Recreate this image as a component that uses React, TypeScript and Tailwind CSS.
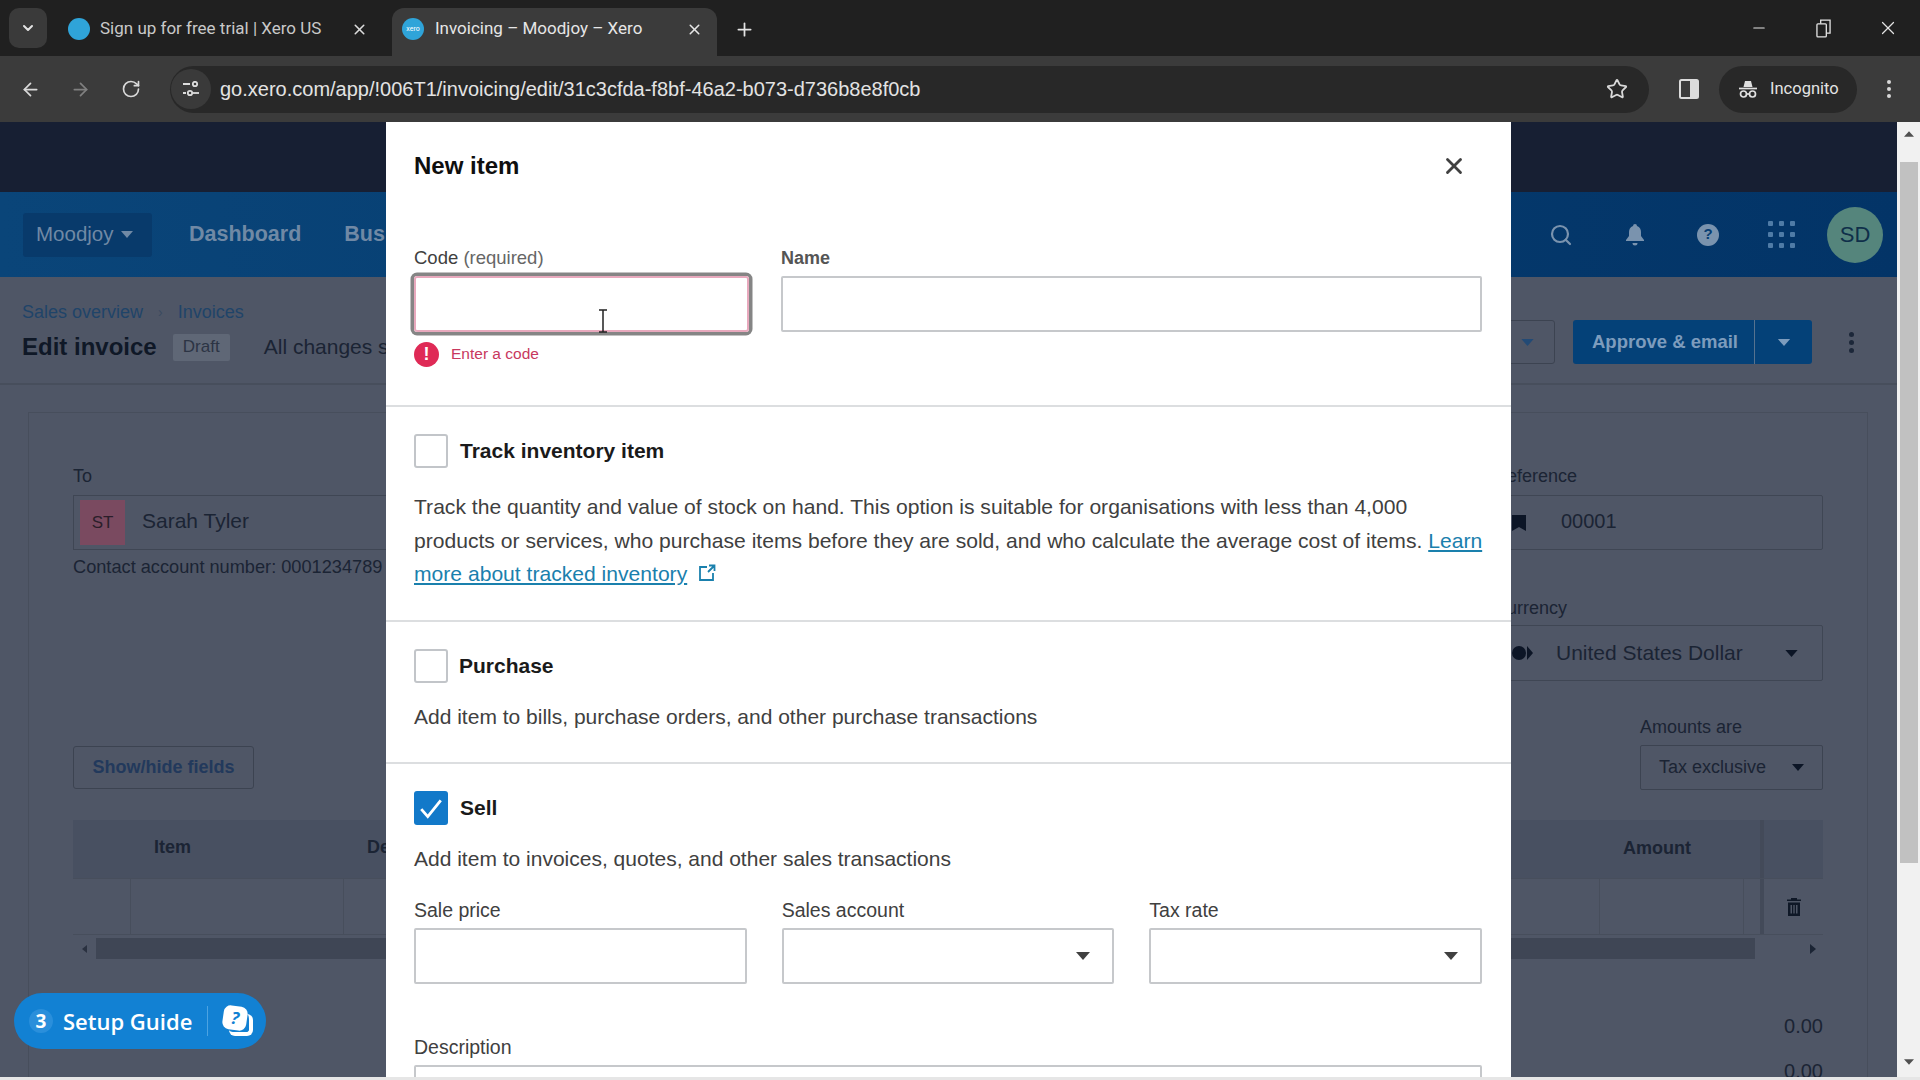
import { ArrowLeft, ArrowRight, ChevronDown, Minus, Plus, RotateCw, Search, Star, X } from 'lucide-react'

const sans = 'font-["Liberation_Sans",Arial,sans-serif]'

function Favicon({ label }: { label?: string }) {
  return (
    <div className="w-[22px] h-[22px] rounded-full bg-[#2fa4d9] flex items-center justify-center text-[7px] text-white shrink-0">
      {label}
    </div>
  )
}

function Caret({ className }: { className: string }) {
  return (
    <svg viewBox="0 0 14 8" className={className} fill="currentColor">
      <path d="M0 0h14L7 8z" />
    </svg>
  )
}

function BrowserChrome() {
  return (
    <div className="shrink-0 font-['Roboto',sans-serif]">
      {/* tab strip */}
      <div className="h-14 bg-[#202020] flex items-end pl-[9px] relative">
        <div className="w-[38px] h-10 mb-2 bg-[#3a3a3a] rounded-[10px] flex items-center justify-center text-[#e3e3e3]">
          <ChevronDown size={16} strokeWidth={3} />
        </div>
        <div className="w-[345px] h-12 flex items-center pb-[6px] pl-[21px] pr-[24px] text-[#c9c9c9]">
          <Favicon />
          <span className="ml-[10px] text-[17px] flex-1 whitespace-nowrap">Sign up for free trial | Xero US</span>
          <X size={17} strokeWidth={2.2} className="text-[#dcdcdc]" />
        </div>
        <div className="w-[325px] h-12 bg-[#3b3b3b] rounded-t-[12px] flex items-center pb-[6px] pl-[10px] pr-[14px] text-[#e6e6e6]">
          <Favicon label="xero" />
          <span className="ml-[11px] text-[17px] flex-1 whitespace-nowrap">Invoicing – Moodjoy – Xero</span>
          <X size={17} strokeWidth={2.2} />
        </div>
        <div className="h-12 ml-[17px] pb-[6px] flex items-center text-[#e3e3e3]">
          <Plus size={21} strokeWidth={2} />
        </div>
        <div className="ml-auto h-14 flex items-center text-[#e3e3e3]">
          <Minus size={18} strokeWidth={1.4} className="mr-[48px]" />
          <svg viewBox="0 0 16 20" className="w-[15px] h-[19px] mr-[46px]" fill="none" stroke="currentColor" strokeWidth="1.4">
            <rect x="1" y="5" width="10" height="14" rx="1" />
            <path d="M5 5V1h10v14h-4" />
          </svg>
          <X size={22} strokeWidth={1.3} className="mr-[21px]" />
        </div>
      </div>
      {/* toolbar */}
      <div className="h-[66px] bg-[#3b3b3b] flex items-center pl-[20px] text-[#d9d9d9]">
        <ArrowLeft size={21} strokeWidth={2} />
        <ArrowRight size={21} strokeWidth={2} className="ml-[29px] text-[#808080]" />
        <RotateCw size={20} strokeWidth={2} className="ml-[30px]" />
        <div className="ml-[29px] w-[1479px] h-[47px] rounded-full bg-[#282828] flex items-center">
          <div className="w-[40px] h-[40px] ml-[1px] rounded-full bg-[#3a3a3a] flex items-center justify-center">
            <svg viewBox="0 0 18 16" className="w-[18px] h-4" fill="none" stroke="#dcdcdc" strokeWidth="1.8">
              <path d="M1 3h7M1 12h3" />
              <circle cx="13" cy="3" r="2.2" />
              <circle cx="8" cy="12" r="2.2" />
              <path d="M11 12h6" />
            </svg>
          </div>
          <span className={`ml-[9px] text-[20px] text-[#e3e3e3] flex-1 whitespace-nowrap ${sans}`}>
            go.xero.com/app/!006T1/invoicing/edit/31c3cfda-f8bf-46a2-b073-d736b8e8f0cb
          </span>
          <Star size={22} strokeWidth={2} className="mr-[21px] text-[#d9d9d9]" />
        </div>
        <svg viewBox="0 0 20 20" className="w-5 h-5 ml-[30px]" fill="none">
          <rect x="1" y="1" width="18" height="18" rx="1.5" stroke="#dcdcdc" strokeWidth="2" />
          <rect x="11" y="1" width="8" height="18" fill="#dcdcdc" />
        </svg>
        <div className="ml-[20px] w-[138px] h-[47px] rounded-full bg-[#282828] flex items-center pl-[19px]">
          <svg viewBox="0 0 20 20" className="w-5 h-5" fill="none" stroke="#e0e0e0" strokeWidth="1.7">
            <path d="M5.5 8L7 2h6l1.5 6z" fill="#e0e0e0" stroke="none" />
            <path d="M1 9.5h18" />
            <circle cx="5.5" cy="15" r="3" />
            <circle cx="14.5" cy="15" r="3" />
            <path d="M8.5 15h3" />
          </svg>
          <span className="ml-[12px] text-[16.5px] text-[#e3e3e3]">Incognito</span>
        </div>
        <div className="ml-[30px] flex flex-col gap-[3px]">
          <div className="w-[4px] h-[4px] rounded-full bg-[#d9d9d9]" />
          <div className="w-[4px] h-[4px] rounded-full bg-[#d9d9d9]" />
          <div className="w-[4px] h-[4px] rounded-full bg-[#d9d9d9]" />
        </div>
      </div>
    </div>
  )
}

function NavBar() {
  return (
    <div className="h-[85px] bg-linear-to-r from-[#0a4579] to-[#033467] flex items-center pl-[23px] pr-[14px]">
      <div className="w-[129px] h-11 bg-[#083a6b] rounded-[3px] flex items-center pl-[13px] text-[20.5px] text-[#7089a5]">
        Moodjoy
        <Caret className="w-[12px] h-[7px] ml-[7px]" />
      </div>
      <span className="ml-[37px] text-[21.5px] font-bold text-[#7089a5]">Dashboard</span>
      <span className="ml-[43px] text-[21.5px] font-bold text-[#7089a5]">Bus</span>
      <div className="ml-auto flex items-center text-[#7a93ae]">
        <Search size={24} strokeWidth={2.2} />
        <svg viewBox="0 0 20 22" className="w-[20px] h-[22px] ml-[52px]" fill="currentColor">
          <path d="M10 0a2 2 0 012 2c3 1 4 3.500 4 6v4l3 4v1H1v-1l3-4V8c0-2.500 1-5 4-6a2 2 0 012-2zM7.500 19h5a2.500 2.500 0 01-5 0z" />
        </svg>
        <div className="w-[22px] h-[22px] ml-[52px] rounded-full bg-[#7a93ae] flex items-center justify-center text-[15px] font-bold text-[#083e73]">?</div>
        <div className="ml-[49px] grid grid-cols-3 gap-x-[6px] gap-y-[6px]">
          {[1, 2, 3, 4, 5, 6, 7, 8, 9].map((n) => (
            <div key={n} className="w-[5px] h-[5px] rounded-[1px] bg-[#4f7ba6]" />
          ))}
        </div>
        <div className="w-14 h-14 ml-[32px] rounded-full bg-[#55857c] flex items-center justify-center text-[22px] text-[#0f2f4a]">SD</div>
      </div>
    </div>
  )
}

function SubHeader() {
  return (
    <div className="h-[108px] border-b-2 border-[#474e5c] pl-[22px] pr-[40px] flex items-center justify-between">
      <div>
        <div className="flex items-center text-[18px] text-[#1f4469] pt-[4px]">
          Sales overview
          <span className="mx-[15px] text-[#3a4a60] text-[14px]">›</span>
          Invoices
        </div>
        <div className="flex items-center mt-[3px]">
          <span className="text-[24px] font-bold text-[#0f1827]">Edit invoice</span>
          <span className="ml-[16px] w-[57px] h-[27px] bg-[#5f6776] rounded-[2px] flex items-center justify-center text-[17px] text-[#2c3444]">Draft</span>
          <span className="ml-[34px] text-[21px] text-[#1b2434] whitespace-nowrap">All changes s</span>
        </div>
      </div>
      <div className="flex items-center mt-[24px]">
        <div className="w-[100px] h-11 border border-[#3c4351] rounded-[3px] flex items-center justify-end pr-[20px] text-[#234a75]">
          <Caret className="w-[13px] h-[7px]" />
        </div>
        <div className="ml-[18px] h-11 w-[239px] bg-[#044178] rounded-[3px] flex items-center text-[#7d9cbd]">
          <span className="w-[182px] pl-[19px] text-[18.5px] font-bold border-r border-[#56728f] leading-[44px] whitespace-nowrap">Approve &amp; email</span>
          <div className="flex-1 flex justify-center">
            <Caret className="w-[14px] h-[7px]" />
          </div>
        </div>
        <div className="ml-[37px] flex flex-col gap-[3px] mr-[3px]">
          <div className="w-[5px] h-[5px] rounded-full bg-[#1c2739]" />
          <div className="w-[5px] h-[5px] rounded-full bg-[#1c2739]" />
          <div className="w-[5px] h-[5px] rounded-full bg-[#1c2739]" />
        </div>
      </div>
    </div>
  )
}

function InvoiceCard() {
  return (
    <div className="mt-[27px] ml-[28px] mr-[29px] h-[700px] border border-[#474e5c] pl-[44px] pr-[44px] text-[#1b2434]">
      <div className="pt-[52px] flex justify-between">
        <div>
          <div className="text-[18px] leading-[22px]">To</div>
          <div className="w-[600px] h-[55px] mt-[8px] border border-[#3f4654] flex items-center pl-[6px]">
            <div className="w-[45px] h-[45px] bg-[#7a4a60] flex items-center justify-center text-[17px] text-[#2b1e2a]">ST</div>
            <span className="ml-[17px] pb-[3px] text-[21px]">Sarah Tyler</span>
          </div>
          <div className="mt-[6px] text-[18.2px] leading-[22px] whitespace-nowrap">Contact account number: 0001234789</div>
        </div>
        <div className="w-[333px]">
          <div className="pl-[4px] text-[18px] leading-[22px]">Reference</div>
          <div className="h-[55px] mt-[8px] border border-[#3f4654] flex items-center pl-[21px] rounded-[2px]">
            <svg viewBox="0 0 14 16" className="w-[14px] h-[16px] text-[#0c1526]" fill="currentColor">
              <path d="M0 0h14v16l-7-4-7 4z" />
            </svg>
            <span className="ml-[35px] pb-[3px] text-[20px]">00001</span>
          </div>
          <div className="mt-[47px] pl-[4px] text-[18px] leading-[22px]">Currency</div>
          <div className="h-14 mt-[6px] border border-[#3f4654] flex items-center pl-[21px] rounded-[2px]">
            <div className="w-[14px] h-[14px] rounded-full bg-[#0c1526]" />
            <svg viewBox="0 0 6 14" className="w-[6px] h-[14px] ml-[1px] text-[#0c1526]" fill="currentColor">
              <path d="M0 0l6 7-6 7z" />
            </svg>
            <span className="ml-[23px] text-[21px] flex-1">United States Dollar</span>
            <Caret className="w-[13px] h-[7px] mr-[24px] text-[#0c1526]" />
          </div>
        </div>
      </div>
      <div className="mt-[35px] flex justify-between items-end">
        <div className="w-[181px] h-[43px] mb-[1px] border border-[#3c4351] rounded-[3px] flex items-center justify-center text-[18px] font-bold text-[#22395c]">Show/hide fields</div>
        <div>
          <div className="text-[18px] font-medium leading-[22px]">Amounts are</div>
          <div className="w-[183px] h-[45px] mt-[7px] border border-[#3c4351] rounded-[2px] flex items-center pl-[18px] text-[18px]">
            <span className="flex-1">Tax exclusive</span>
            <Caret className="w-[12px] h-[7px] mr-[18px] text-[#0c1526]" />
          </div>
        </div>
      </div>
      {/* line item table */}
      <div className="mt-[30px]">
        <div className="h-[58px] bg-[#485061] flex items-center pb-[3px] text-[18px] font-bold relative">
          <span className="ml-[81px]">Item</span>
          <span className="ml-[176px]">De</span>
          <span className="absolute left-[1550px] top-[15px]">Amount</span>
          <div className="absolute left-[1687px] top-0 bottom-0 w-[4px] bg-[#434a59]" />
        </div>
        <div className="h-[57px] flex border-y border-[#474e5c]">
          <div className="w-[58px] border-r border-[#474e5c]" />
          <div className="w-[213px] border-r border-[#474e5c]" />
          <div className="flex-1" />
          <div className="w-[145px] border-x border-[#474e5c] mr-[16px]" />
          <div className="w-[63px] border-l-4 border-[#434a59] flex items-center justify-center text-[#0f1827]">
            <svg viewBox="0 0 14 18" className="w-[14px] h-[18px]" fill="currentColor">
              <path d="M4 0h6v1.500h4V3H0V1.500h4zM1 4.500h12V18H1zM3.500 7v8.500H5V7zM6.300 7v8.500h1.400V7zM9 7v8.500h1.500V7z" />
            </svg>
          </div>
        </div>
        <div className="mt-[3px] h-[21px] flex items-center">
          <div className="w-[23px] flex justify-center">
            <div className="w-0 h-0 border-y-[4px] border-y-transparent border-r-[5px] border-r-[#2a3140]" />
          </div>
          <div className="w-[1659px] h-[21px] bg-[#3f4655]" />
          <div className="flex-1 flex justify-end pr-[7px]">
            <div className="w-0 h-0 border-y-[5px] border-y-transparent border-l-[6px] border-l-[#1b2434]" />
          </div>
        </div>
      </div>
      <div className="mt-[54px] text-right text-[20px] leading-[26px]">0.00</div>
      <div className="mt-[19px] text-right text-[20px] leading-[26px]">0.00</div>
    </div>
  )
}

function Checkbox({ checked }: { checked?: boolean }) {
  return checked ? (
    <div className="w-[34px] h-[34px] rounded-[3px] bg-[#1279c9] flex items-center justify-center shrink-0">
      <svg viewBox="0 0 24 24" className="w-[26px] h-[26px]" fill="none" stroke="white" strokeWidth="2.600">
        <path d="M3 13l6 7L21 5" />
      </svg>
    </div>
  ) : (
    <div className="w-[34px] h-[34px] rounded-[3px] border-2 border-[#c2c5c9] bg-white shrink-0" />
  )
}

function Field({ label, caret }: { label: string; caret?: boolean }) {
  return (
    <div>
      <div className="text-[19.5px] leading-[22px] text-[#404040]">{label}</div>
      <div className="h-[56px] mt-[7px] border-2 border-[#c6c8cb] rounded-[2px] flex items-center justify-end pr-[22px] text-[#404040]">
        {caret && <Caret className="w-[14px] h-[8px]" />}
      </div>
    </div>
  )
}

function NewItemModal() {
  return (
    <div className={`absolute left-[386px] top-0 bottom-0 w-[1125px] bg-white overflow-hidden text-[#2a2a2a] ${sans}`}>
      <div className="pt-[30px] pl-[28px] pr-[44px] flex items-center justify-between">
        <h2 className="text-[24px] leading-[28px] font-bold text-[#0f0f0f]">New item</h2>
        <X size={26} strokeWidth={2.6} className="text-[#404040]" />
      </div>

      <div className="pt-[67px] pl-[28px] pr-[29px] pb-[39px] border-b-2 border-[#dcdee0]">
        <div className="grid grid-cols-[335px_1fr] gap-x-[32px]">
          <div>
            <div className="text-[18.5px] leading-[22px] text-[#404040]">
              Code <span className="text-[#666666]">(required)</span>
            </div>
            <div className="relative h-[56px] mt-[7px] border-2 border-[#e8a9bd] rounded-[3px] shadow-[0_0_0_3.5px_#858585]">
              <svg viewBox="0 0 12 24" className="absolute left-[181px] top-[31px] w-[12px] h-[24px]" fill="none" stroke="#222222" strokeWidth="1.500">
                <path d="M2 1h8M6 1v22M2 23h8" />
              </svg>
            </div>
          </div>
          <div>
            <div className="text-[18px] leading-[22px] font-bold text-[#555555]">Name</div>
            <div className="h-[56px] mt-[7px] border-2 border-[#c6c8cb] rounded-[2px]" />
          </div>
        </div>
        <div className="mt-[10px] h-6 flex items-center">
          <div className="w-[25px] h-[25px] rounded-full bg-[#df2a56] flex items-center justify-center text-white text-[18px] font-bold">!</div>
          <span className="ml-[12px] text-[15.5px] text-[#c8385e]">Enter a code</span>
        </div>
      </div>

      <div className="pt-[27px] pl-[28px] pr-[29px] pb-[29px] border-b-2 border-[#dcdee0]">
        <div className="flex items-center">
          <Checkbox />
          <span className="ml-[12px] text-[21px] font-bold text-[#1a1a1a]">Track inventory item</span>
        </div>
        <p className="mt-[22px] text-[21.1px] leading-[33.500px] text-[#404040] whitespace-nowrap">
          Track the quantity and value of stock on hand. This option is suitable for organisations with less than 4,000
          <br />
          products or services, who purchase items before they are sold, and who calculate the average cost of items.{' '}
          <span className="text-[#1a80ad] underline">Learn</span>
          <br />
          <span className="text-[#1a80ad] underline">more about tracked inventory</span>
          <svg viewBox="0 0 18 18" className="inline w-[18px] h-[18px] ml-[11px] align-[-1px]" fill="none" stroke="#1a80ad" strokeWidth="1.800">
            <path d="M9 3H2v13h13V9M11 1.500h5.500V7M16 2l-6 6" />
          </svg>
        </p>
      </div>

      <div className="pt-[27px] pl-[28px] pr-[29px] pb-[29px] border-b-2 border-[#dcdee0]">
        <div className="flex items-center">
          <Checkbox />
          <span className="ml-[11px] text-[21px] font-bold text-[#1a1a1a]">Purchase</span>
        </div>
        <p className="mt-[17px] text-[21px] leading-[33.500px] text-[#404040] whitespace-nowrap">Add item to bills, purchase orders, and other purchase transactions</p>
      </div>

      <div className="pt-[27px] pl-[28px] pr-[29px]">
        <div className="flex items-center">
          <Checkbox checked />
          <span className="ml-[12px] text-[21px] font-bold text-[#1a1a1a]">Sell</span>
        </div>
        <p className="mt-[17px] text-[21px] leading-[33.500px] text-[#404040] whitespace-nowrap">Add item to invoices, quotes, and other sales transactions</p>
        <div className="mt-[23px] grid grid-cols-3 gap-x-[35px]">
          <Field label="Sale price" />
          <Field label="Sales account" caret />
          <Field label="Tax rate" caret />
        </div>
        <div className="mt-[52px] text-[19.5px] leading-[22px] text-[#404040]">Description</div>
        <div className="h-[60px] mt-[7px] border-2 border-[#c6c8cb] rounded-[2px]" />
      </div>
    </div>
  )
}

function SetupGuide() {
  return (
    <div className="absolute left-[14px] bottom-[28px] w-[252px] h-14 rounded-full bg-[#1281d3] flex items-center pl-[15px] text-white font-['Open_Sans',sans-serif]">
      <div className="w-6 h-6 rounded-full bg-[#2a8fdb] flex items-center justify-center text-[19px] font-bold">3</div>
      <span className="ml-[10px] text-[22px] font-semibold whitespace-nowrap">Setup Guide</span>
      <div className="ml-[15px] w-px h-[30px] bg-[#4ca3e2]" />
      <div className="relative ml-[15px] w-[30px] h-[30px]">
        <div className="absolute right-0 bottom-0 w-[24px] h-[22px] rounded-[6px] border-b-[4px] border-r-[4px] border-white" />
        <div className="absolute left-0 top-0 w-[24px] h-[24px] rounded-[7px] rotate-[8deg] bg-white flex items-center justify-center text-[17px] font-bold italic text-[#1281d3]">?</div>
      </div>
    </div>
  )
}

function PageScrollbar() {
  return (
    <div className="w-[23px] shrink-0 bg-[#f1f1f1] flex flex-col items-center text-[#505050]">
      <div className="h-10 w-full flex items-start justify-center pt-[9px]">
        <Caret className="w-[10px] h-[6px] rotate-180" />
      </div>
      <div className="w-[18px] h-[701px] bg-[#c1c1c1]" />
      <div className="mt-auto h-[30px] flex items-center">
        <Caret className="w-[10px] h-[6px]" />
      </div>
    </div>
  )
}

export default function App() {
  return (
    <div className={`w-[1920px] h-[1080px] overflow-hidden flex flex-col bg-[#e6e6e6] ${sans}`}>
      <BrowserChrome />
      <div className="h-[955px] flex">
        <div className="relative flex-1 overflow-hidden bg-[#4f5666]">
          <div className="h-[70px] bg-[#171f33]" />
          <NavBar />
          <SubHeader />
          <InvoiceCard />
          <NewItemModal />
          <SetupGuide />
        </div>
        <PageScrollbar />
      </div>
    </div>
  )
}
